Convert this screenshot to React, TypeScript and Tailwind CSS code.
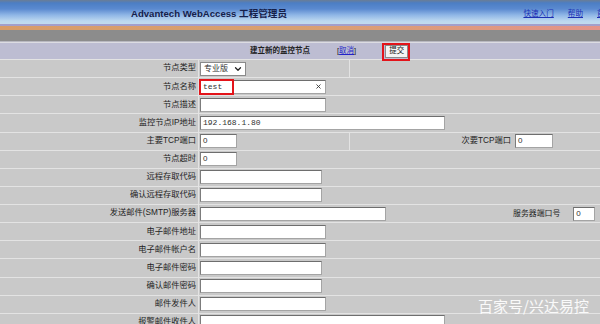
import { ChevronDown, X } from "lucide-react";
import type { ReactNode } from "react";

const cjk = '"Liberation Sans", "Noto Sans CJK SC", sans-serif';
const mono = '"Liberation Mono", "Noto Sans CJK SC", monospace';

function Field({ w, value, mono: isMono, children }: { w: number; value?: string; mono?: boolean; children?: ReactNode }) {
  return (
    <div
      className="relative flex h-[14px] items-center border border-[#a4a4a4] border-t-[#6e6e6e] border-l-[#7c7c7c] bg-white px-[2px] text-[8px] text-[#303030]"
      style={{ width: w, fontFamily: isMono ? mono : cjk }}
    >
      {value}
      {children}
    </div>
  );
}

function Label({ children, w = 198 }: { children: ReactNode; w?: number }) {
  return (
    <div
      className="flex shrink-0 items-center justify-end bg-[#c9c9c9] pr-[2px] text-[8.25px] text-[#1e1e1e]"
      style={{ width: w }}
    >
      {children}
    </div>
  );
}

function Row({ label, children }: { label: string; children: ReactNode }) {
  return (
    <div className="flex h-[17.14px] shrink-0 gap-px">
      <Label>{label}</Label>
      {children}
    </div>
  );
}

function Cell({ children, w }: { children?: ReactNode; w?: number }) {
  return (
    <div
      className={"flex items-center bg-[#c9c9c9] pl-px " + (w ? "shrink-0" : "flex-1")}
      style={w ? { width: w } : undefined}
    >
      {children}
    </div>
  );
}

export default function App() {
  return (
    <div className="relative h-[324px] w-[600px] overflow-hidden bg-[#c9c9c9]" style={{ fontFamily: cjk }}>
      {/* top banner */}
      <div className="flex h-[24px] items-center whitespace-nowrap bg-[linear-gradient(to_bottom,#6a7d96_0px,#4c7ec4_3px,#5b8ad0_9px,#8fb6e6_15px,#bcd8ef_21px,#c2dcee_24px)] pt-[4px]">
        <div className="pl-[131px] text-[9.6px] font-bold text-[#15204a]">Advantech WebAccess 工程管理员</div>
        <div className="ml-auto flex items-center gap-[14px] text-[7.6px] text-[#1b2fb4]">
          <span className="underline">快速入门</span>
          <span className="underline">帮助</span>
          <span className="w-[3px] overflow-hidden underline">首页</span>
        </div>
      </div>
      <div className="h-[2px] bg-[#a39fcb]" />
      <div className="h-[4px] bg-[linear-gradient(to_right,#d89c68,#d9a070_50%,#e3948a)]" />
      <div className="h-[11px] bg-[#8c8c8c]" />
      <div className="h-[1px] bg-[#b8b8c0]" />
      <div className="h-[1px] bg-[#dcdce2]" />

      <div className="flex flex-col gap-px bg-[#e3e3e3]">
        {/* form title */}
        <div className="flex h-[16px] items-center bg-[#bdbdd2] text-[7.5px]">
          <span className="pl-[250px] font-bold text-[#202020]">建立新的监控节点</span>
          <span className="ml-[27px] text-[#202020]">
            [<span className="text-[#2323c8] underline">取消</span>]
          </span>
          <span className="relative ml-[29px] flex h-[13px] items-center border border-[#8a8a8a] bg-[#f4f4f4] px-[3px] text-[7.5px] text-[#202020]">
            提交
            <span className="absolute -top-[3px] -left-[4px] h-[18px] w-[28px] border-2 border-[#e3141a]" />
          </span>
        </div>

        <Row label="节点类型">
          <Cell w={150}>
            <div className="flex h-[14px] w-[46px] items-center justify-between border border-[#8a8a8a] bg-white pl-[3px] pr-[2px] text-[8px] text-[#303030]">
              专业版
              <ChevronDown size={10} strokeWidth={3} className="text-[#222]" />
            </div>
          </Cell>
          <Cell />
        </Row>

        <Row label="节点名称">
          <Cell>
            <Field w={126} value="test" mono>
              <X size={7} strokeWidth={3} className="ml-auto mr-[1px] text-[#333]" />
              <span className="absolute -top-[2px] -left-[2px] h-[16px] w-[35px] border-2 border-[#e3141a]" />
            </Field>
          </Cell>
        </Row>

        <Row label="节点描述">
          <Cell>
            <Field w={126} />
          </Cell>
        </Row>

        <Row label="监控节点IP地址">
          <Cell>
            <Field w={245} value="192.168.1.80" mono />
          </Cell>
        </Row>

        <Row label="主要TCP端口">
          <Cell w={150}>
            <Field w={37} value="0" />
          </Cell>
          <Cell>
            <div className="w-[162px] pr-[2px] text-right text-[8.25px] text-[#1e1e1e]">次要TCP端口</div>
            <div className="ml-[2px]">
              <Field w={38} value="0" />
            </div>
          </Cell>
        </Row>

        <Row label="节点超时">
          <Cell>
            <Field w={37} value="0" />
          </Cell>
        </Row>

        <Row label="远程存取代码">
          <Cell>
            <Field w={122} />
          </Cell>
        </Row>

        <Row label="确认远程存取代码">
          <Cell>
            <Field w={122} />
          </Cell>
        </Row>

        <Row label="发送邮件(SMTP)服务器">
          <Cell>
            <Field w={186} />
            <span className="ml-[127px] text-[7.9px] text-[#1e1e1e]">服务器端口号</span>
            <div className="ml-[13px]">
              <Field w={22} value="0" />
            </div>
          </Cell>
        </Row>

        <Row label="电子邮件地址">
          <Cell>
            <Field w={126} />
          </Cell>
        </Row>

        <Row label="电子邮件帐户名">
          <Cell>
            <Field w={126} />
          </Cell>
        </Row>

        <Row label="电子邮件密码">
          <Cell>
            <Field w={122} />
          </Cell>
        </Row>

        <Row label="确认邮件密码">
          <Cell>
            <Field w={122} />
          </Cell>
        </Row>

        <Row label="邮件发件人">
          <Cell>
            <Field w={126} />
          </Cell>
        </Row>

        <Row label="报警邮件收件人">
          <Cell>
            <Field w={245} />
          </Cell>
        </Row>
      </div>

      {/* watermark */}
      <div
        className="absolute left-[478px] top-[296px] text-[15px] leading-[20px] text-white/90"
        style={{ fontFamily: '"Noto Sans CJK SC", sans-serif' }}
      >
        百家号/兴达易控
      </div>
    </div>
  );
}
